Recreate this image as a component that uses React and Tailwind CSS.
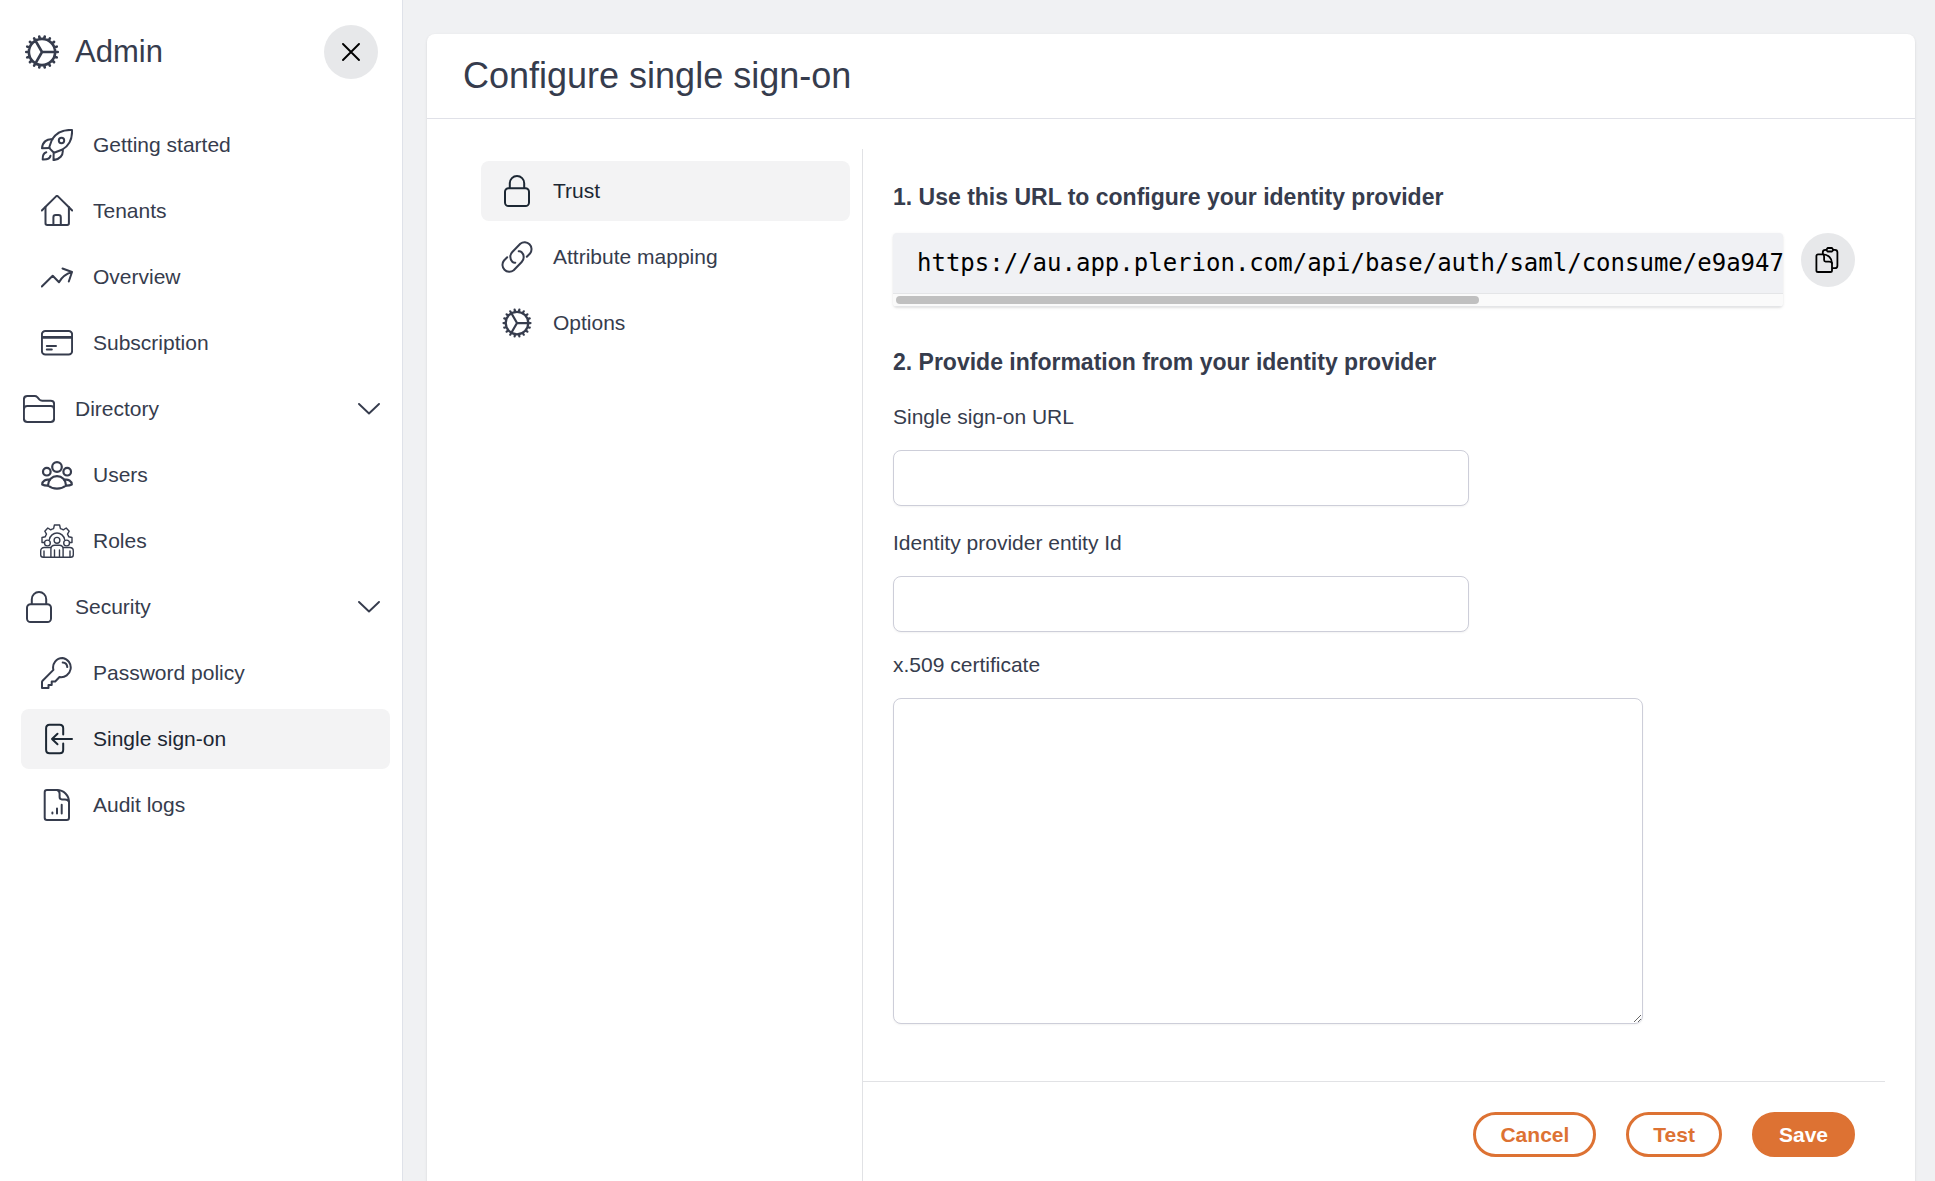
import { HiOutlineCog } from "react-icons/hi2";

function Icon({ children, className = "size-8", box = "0 0 32 32", stroke = 2 }) {
  return (
    <svg
      className={className}
      viewBox={box}
      fill="none"
      stroke="currentColor"
      strokeWidth={stroke}
      strokeLinecap="round"
      strokeLinejoin="round"
      aria-hidden="true"
    >
      {children}
    </svg>
  );
}

const RocketIcon = () => (
  <Icon>
    <path d="M31 1c-9-.5-16 3-20 9.500L8.500 17.500c-.3 1 .2 2 .8 2.600l2.600 2.600c.7.600 1.600.900 2.500.600l7.100-2.800C28 16.500 31.500 10 31 1z" />
    <path d="M11.500 10.300C6 9.500 1.500 13 1 19.300l7.500-.3M21.700 20.800c.8 5.500-3 9.700-9.200 10.300l.2-7.800" />
    <circle cx="20.500" cy="11.500" r="2.700" />
    <path d="M5.300 23.200C2.500 24 1.500 26.500 1.700 30.500c4.300.2 7.300-1 7.800-3.700" />
  </Icon>
);

const HomeIcon = () => (
  <Icon>
    <path d="M.8 15.500 14.800 1.600a1.700 1.700 0 0 1 2.400 0L31.200 15.500" />
    <path d="M4.500 12v16.300c0 1 .7 1.700 1.700 1.700h20c1 0 1.700-.7 1.700-1.700V12M12.400 30v-7.600c0-1.300 1-2.300 2.300-2.300h2.800c1.300 0 2.300 1 2.300 2.300V30" />
  </Icon>
);

const TrendIcon = () => (
  <Icon>
    <path d="M.8 25.500 11.700 14.700l6.300 6.600c2.500-4.800 7-8.500 13-10.300M21.500 7.500 31 11l-3.200 9.500" />
  </Icon>
);

const CardIcon = () => (
  <Icon>
    <rect x=".9" y="4" width="30.200" height="23.600" rx="3.500" />
    <path d="M1 10.400h30" strokeWidth="2.600" />
    <path d="M5.800 19h9.200M5.800 22.600h5" />
  </Icon>
);

const FolderIcon = () => (
  <Icon>
    <path d="M.9 16V6.500C.9 4.500 2.300 3 4.300 3h7.400c1 0 1.900.4 2.600 1.100l2.200 2.500c.7.700 1.600 1.100 2.600 1.100h8.600c2 0 3.400 1.500 3.400 3.400V16" />
    <path d="M4.300 13h23.400c2 0 3.400 1.500 3.400 3.400v9.200c0 2-1.500 3.400-3.400 3.400H4.300c-2 0-3.400-1.500-3.400-3.400v-9.200c0-2 1.500-3.400 3.400-3.400z" />
  </Icon>
);

const UsersIcon = () => (
  <Icon stroke={2.2}>
    <circle cx="16" cy="8" r="4.800" />
    <circle cx="5.800" cy="12.700" r="3.800" />
    <circle cx="26.200" cy="12.700" r="3.800" />
    <path d="M7 26.500c0-5.500 4-9.300 9-9.300s9 3.800 9 9.300c-2.600 2.200-5.800 3.200-9 3.200s-6.400-1-9-3.200z" />
    <path d="M8.500 20.700C4.800 20 1.300 21.800 1.200 25.500c1.600.9 3.300 1.200 5.300 1.200M23.500 20.700c3.700-.7 7.200 1.100 7.300 4.800-1.600.9-3.300 1.200-5.300 1.200" />
  </Icon>
);

const RolesIcon = () => (
  <Icon className="size-[34px]" box="0 0 34 34" stroke={1.4}>
    <path d="M4.300 18.500H2v-5l3.300-.7c.3-1 .7-1.900 1.200-2.700L4.800 7.200l3-3.200 2.900 1.800c.9-.5 1.900-.9 2.900-1.200l.8-3.600h5.200l.8 3.600c1 .3 2 .7 2.900 1.200L26.200 4l3 3.200-1.700 2.900c.5.800.9 1.700 1.200 2.700l3.300.7v5h-2.300" />
    <path d="M9.400 15.500a7.700 7.700 0 0 1 15.200 0" />
    <circle cx="17" cy="16.300" r="2.900" />
    <circle cx="7.400" cy="19" r="2.900" />
    <circle cx="26.600" cy="19" r="2.900" />
    <path d="M10.900 33.300V25c0-2.300 1.600-3.800 3.800-3.800h4.600c2.200 0 3.800 1.500 3.800 3.800v8.300zM10.500 23.500H4.300C2.100 23.500.7 25 .7 27v3.800c0 1.500 1 2.500 2.500 2.500h7.700M23.500 23.500h6.200c2.200 0 3.600 1.500 3.600 3.500v3.800c0 1.500-1 2.500-2.500 2.500h-7.700M14.500 26v7.300M19.500 26v7.300M4 27v6.300M30 27v6.300" />
  </Icon>
);

const LockIcon = () => (
  <Icon>
    <path d="M8.800 13V8.200a7.200 7.200 0 0 1 14.400 0V13" />
    <rect x="4" y="13.200" width="24" height="17.800" rx="3.600" />
  </Icon>
);

const KeyIcon = () => (
  <Icon>
    <path d="M21.700 1a9.500 9.500 0 0 0-9.300 11.900L1.600 23.700c-.4.400-.6.800-.6 1.300v6h6.500v-3.100h3.200v-3.400h3.500l4.300-4.500a9.500 9.500 0 1 0 3.200-19z" />
    <path d="M21.700 5.500a5 5 0 0 1 4.600 4.600" />
  </Icon>
);

const SignInIcon = () => (
  <Icon>
    <path d="M22.200 11.500V5.300c0-2-1.500-3.500-3.500-3.500H8.600c-2 0-3.500 1.500-3.500 3.500v21.400c0 2 1.500 3.500 3.500 3.500h10.100c2 0 3.500-1.500 3.500-3.500v-6.200" />
    <path d="M31 16H11M16.500 10.800 11 16l5.500 5.200" />
  </Icon>
);

const ReportIcon = () => (
  <Icon>
    <path d="M16 1H6C4.700 1 3.700 2 3.700 3.200v25.600c0 1.200 1 2.200 2.300 2.200h19.700c1.300 0 2.300-1 2.300-2.200V13C28 6.300 22.600 1 16 1z" />
    <path d="M16 1c1.800.5 2.600 1.700 2.600 3.700v3.400c0 1.300 1 2.300 2.300 2.300H24c2.200 0 3.600 1 4 2.600" />
    <path d="M11.400 23.500v1M16 19.500v5M20.700 15.800v8.700" />
  </Icon>
);

const LinkIcon = () => (
  <Icon>
    <path d="m25.800 15.800 3.200-3.300a6.900 6.900 0 0 0-9.700-9.700l-8 8.200a6.900 6.900 0 0 0 0 9.700c.8.800 1.900 1.200 3 1" />
    <path d="M6.200 16.200 3 19.500a6.900 6.900 0 0 0 9.700 9.700l8-8.200a6.900 6.900 0 0 0 0-9.700c-.8-.8-1.900-1.200-3-1" />
  </Icon>
);

const CopyIcon = () => (
  <Icon className="size-[26px]" box="0 0 26 26" stroke={1.8}>
    <path d="M7.800 6.500V5.300c0-1.500 1-2.500 2.500-2.500h1.300M18 2.800h1.900c1.500 0 2.500 1 2.500 2.500v13.400c0 1.500-1 2.500-2.500 2.500H18" />
    <path d="M12.600 1H17l1.400 2-1.400 1.500h-4.400L11.200 3z" />
    <path d="M8 7.300H3c-.9 0-1.600.7-1.600 1.600v14.500c0 .9.700 1.600 1.600 1.600h12.400c.9 0 1.600-.7 1.600-1.600v-7.200c0-4.900-4-8.900-9-8.900z" />
    <path d="M8 7.300c.9.500 1.100 1.300 1.100 2.400v3.400c0 .9.700 1.500 1.500 1.500h3.400c1.400 0 2.500.5 3 1.600" />
  </Icon>
);

const ChevronIcon = () => (
  <Icon className="ml-auto h-3 w-[22px]" box="0 0 22 12" stroke={1.9}>
    <path d="m1 1 10 9.500L21 1" />
  </Icon>
);

const adminItems = [
  { label: "Getting started", icon: <RocketIcon /> },
  { label: "Tenants", icon: <HomeIcon /> },
  { label: "Overview", icon: <TrendIcon /> },
  { label: "Subscription", icon: <CardIcon /> },
  { label: "Directory", icon: <FolderIcon />, group: true },
  { label: "Users", icon: <UsersIcon /> },
  { label: "Roles", icon: <RolesIcon /> },
  { label: "Security", icon: <LockIcon />, group: true },
  { label: "Password policy", icon: <KeyIcon /> },
  { label: "Single sign-on", icon: <SignInIcon />, active: true },
  { label: "Audit logs", icon: <ReportIcon /> },
];

const ssoItems = [
  { label: "Trust", icon: <LockIcon />, active: true },
  { label: "Attribute mapping", icon: <LinkIcon /> },
  { label: "Options", icon: <HiOutlineCog className="size-9" aria-hidden="true" /> },
];

function NavItem({ item }) {
  const content = (
    <>
      <span className="flex w-8 shrink-0 items-center justify-center [&>svg]:shrink-0">{item.icon}</span>
      {item.label}
    </>
  );

  if (item.group) {
    return (
      <button
        type="button"
        aria-expanded="true"
        className="flex h-[60px] w-full items-center gap-5 pl-[2px] pr-[10px] text-left"
      >
        {content}
        <ChevronIcon />
      </button>
    );
  }

  return (
    <a
      href="#"
      aria-current={item.active ? "page" : undefined}
      className={
        item.active
          ? "flex h-[60px] items-center gap-5 rounded-lg bg-[#f3f3f4] px-5 text-[#1c2733]"
          : "flex h-[60px] items-center gap-5 rounded-lg px-5"
      }
    >
      {content}
    </a>
  );
}

function Sidebar() {
  return (
    <aside className="w-[403px] shrink-0 border-r border-[#dfe2e9] bg-white pl-[21px] pr-3">
      <div className="flex items-center gap-3 pr-3 pt-[25px]">
        <HiOutlineCog className="size-[42px]" aria-hidden="true" />
        <h2 className="text-[31px] leading-10">Admin</h2>
        <button
          type="button"
          aria-label="Close"
          className="ml-auto flex size-[54px] items-center justify-center rounded-full bg-[#e7e8ea] text-black"
        >
          <Icon className="size-[18px]" box="0 0 18 18" stroke={1.9}>
            <path d="m1 1 16 16M17 1 1 17" />
          </Icon>
        </button>
      </div>
      <nav aria-label="Admin" className="mt-9 flex flex-col gap-[6px]">
        {adminItems.map((item) => (
          <NavItem key={item.label} item={item} />
        ))}
      </nav>
    </aside>
  );
}

const inputClass = "block w-full rounded-lg border border-[#cdced9] bg-white px-4 shadow-xs";

function TrustForm() {
  return (
    <form className="min-w-0 grow border-l border-[#e1e2e5]" onSubmit={(e) => e.preventDefault()}>
      <div className="px-[30px] pt-[33px]">
        <h2 className="text-[23px] font-bold leading-[30px]">1. Use this URL to configure your identity provider</h2>
        <div className="mt-[21px] flex items-start gap-[18px]">
          <div className="min-w-0 grow overflow-hidden rounded-sm bg-[#f0f1f4] shadow">
            <div className="overflow-hidden whitespace-nowrap py-[14px] pl-6 font-['DejaVu_Sans_Mono',monospace] text-[24px] leading-8 text-black">
              https://au.app.plerion.com/api/base/auth/saml/consume/e9a947
            </div>
            <div className="border-y border-[#e4e5e7] bg-[#fafafa] px-[3px] py-[2px]">
              <div className="h-2 w-[66%] rounded-full bg-[#c0c0c0]" />
            </div>
          </div>
          <button
            type="button"
            aria-label="Copy URL"
            className="flex size-[54px] shrink-0 items-center justify-center rounded-full bg-[#e7e8ea] text-black"
          >
            <CopyIcon />
          </button>
        </div>

        <h2 className="mt-10 text-[23px] font-bold leading-[30px]">2. Provide information from your identity provider</h2>
        <div className="mt-[25px] max-w-[576px]">
          <label htmlFor="sso-url" className="block">Single sign-on URL</label>
          <input id="sso-url" type="url" className={`${inputClass} mt-[18px] h-14`} />
        </div>
        <div className="mt-[22px] max-w-[576px]">
          <label htmlFor="entity-id" className="block">Identity provider entity Id</label>
          <input id="entity-id" type="text" className={`${inputClass} mt-[18px] h-14`} />
        </div>
        <div className="mt-[18px] max-w-[750px]">
          <label htmlFor="certificate" className="block">x.509 certificate</label>
          <textarea id="certificate" className={`${inputClass} mt-[18px] h-[326px] py-3`} />
        </div>
      </div>

      <div className="mt-[57px] flex justify-end gap-[30px] border-t border-[#e1e2e5] px-[30px] py-[30px] font-bold">
        <button type="button" className="h-[45px] rounded-full border-3 border-[#dd7233] px-6 text-[#dd7233]">
          Cancel
        </button>
        <button type="button" className="h-[45px] rounded-full border-3 border-[#dd7233] px-6 text-[#dd7233]">
          Test
        </button>
        <button type="submit" className="h-[45px] rounded-full border-3 border-[#dd7233] bg-[#dd7233] px-6 text-white">
          Save
        </button>
      </div>
    </form>
  );
}

export default function App() {
  return (
    <div className="flex h-screen overflow-hidden bg-[#f0f1f3] font-['Liberation_Sans',Arial,sans-serif] text-[21px] leading-[30px] text-[#363c4d]">
      <Sidebar />
      <main className="flex min-w-0 grow flex-col pl-6 pr-5 pt-[34px]">
        <section className="flex grow flex-col rounded-t-lg bg-white shadow">
          <header className="border-b border-[#e0e1e8] px-9 py-5">
            <h1 className="text-[36px] leading-[44px]">Configure single sign-on</h1>
          </header>
          <div className="flex grow pl-[54px] pr-[30px] pt-[30px]">
            <nav aria-label="Single sign-on" className="mr-3 flex w-[369px] shrink-0 flex-col gap-[6px] pt-3">
              {ssoItems.map((item) => (
                <NavItem key={item.label} item={item} />
              ))}
            </nav>
            <TrustForm />
          </div>
        </section>
      </main>
    </div>
  );
}
